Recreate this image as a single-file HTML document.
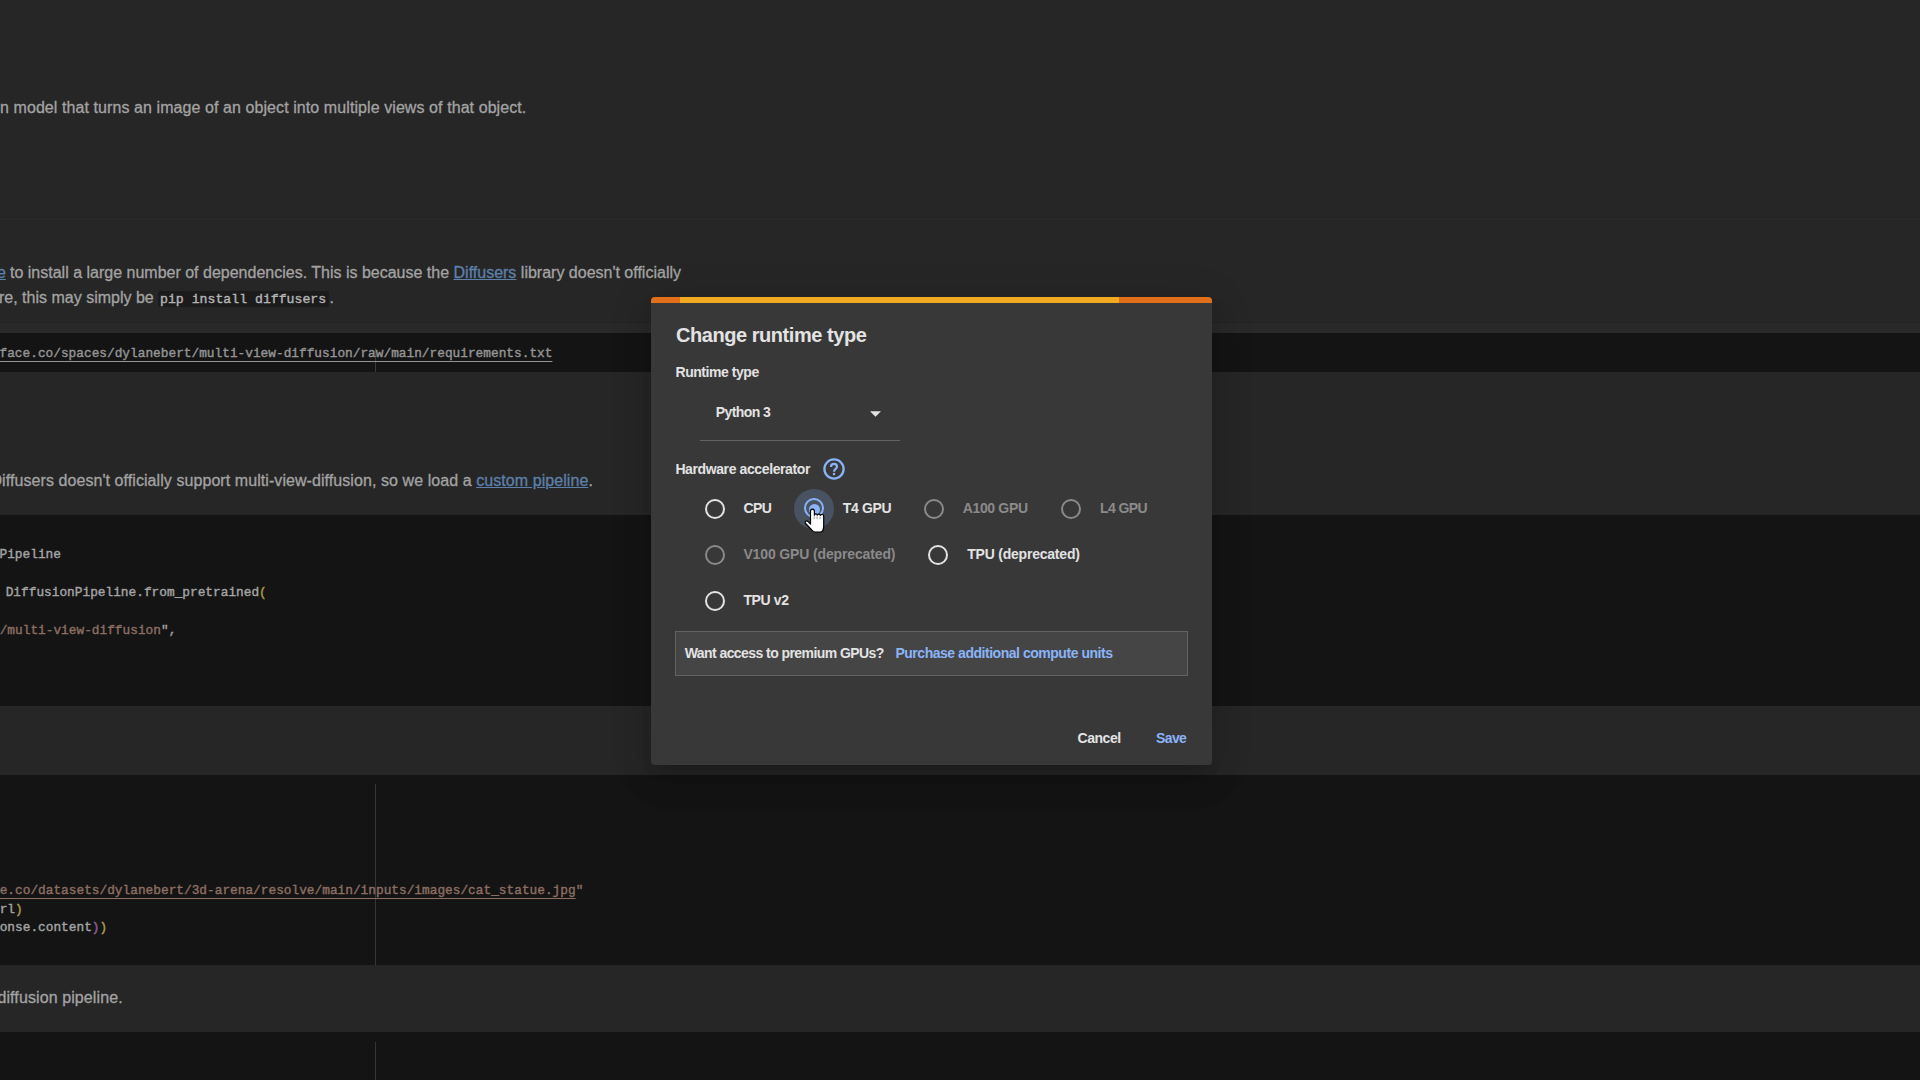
<!DOCTYPE html>
<html><head><meta charset="utf-8"><style>
html,body{margin:0;padding:0;}
body{width:1920px;height:1080px;overflow:hidden;position:relative;background:#262626;font-family:"Liberation Sans",sans-serif;}
</style></head><body>
<div style="position:absolute;left:0px;top:217px;width:1920px;height:1px;background:#222222;"></div>
<div style="position:absolute;left:0px;top:218px;width:1920px;height:1px;background:#292929;"></div>
<div style="position:absolute;left:0px;top:322px;width:1920px;height:1px;background:#232323;"></div>
<div style="position:absolute;left:0px;top:323px;width:1920px;height:10px;background:#292929;"></div>
<div style="position:absolute;left:0px;top:333px;width:1920px;height:39px;background:#141414;"></div>
<div style="position:absolute;left:0px;top:515px;width:1920px;height:191px;background:#141414;"></div>
<div style="position:absolute;left:0px;top:775px;width:1920px;height:190px;background:#141414;"></div>
<div style="position:absolute;left:0px;top:1032px;width:1920px;height:48px;background:#141414;"></div>
<div style="position:absolute;left:375px;top:348px;width:1px;height:24px;background:#3a3a3a;"></div>
<div style="position:absolute;left:375px;top:784px;width:1px;height:181px;background:#363636;"></div>
<div style="position:absolute;left:375px;top:1042px;width:1px;height:38px;background:#363636;"></div>
<div style="position:absolute;left:0px;top:96.75px;height:22px;line-height:22px;font-family:'Liberation Sans', sans-serif;font-size:16px;font-weight:normal;letter-spacing:0.08px;color:#a3a3a3;white-space:pre;-webkit-text-stroke:0.3px currentColor;">n model that turns an image of an object into multiple views of that object.</div>
<div style="position:absolute;left:10px;top:261.85px;height:22px;line-height:22px;font-family:'Liberation Sans', sans-serif;font-size:16px;font-weight:normal;letter-spacing:0px;color:#a3a3a3;white-space:pre;-webkit-text-stroke:0.3px currentColor;">to install a large number of dependencies. This is because the <span style="color:#5d80ab;text-decoration:underline">Diffusers</span> library doesn't officially</div>
<div style="position:absolute;left:-3px;top:261.85px;height:22px;line-height:22px;font-family:'Liberation Sans', sans-serif;font-size:16px;font-weight:normal;letter-spacing:0px;color:#a3a3a3;white-space:pre;-webkit-text-stroke:0.3px currentColor;"><span style="color:#5d80ab;text-decoration:underline">e</span></div>
<div style="position:absolute;left:-1px;top:287.15px;height:22px;line-height:22px;font-family:'Liberation Sans', sans-serif;font-size:16px;font-weight:normal;letter-spacing:0px;color:#a3a3a3;white-space:pre;-webkit-text-stroke:0.3px currentColor;">re, this may simply be </div>
<div style="position:absolute;left:158px;top:291px;width:171px;height:16px;background:#1b1b1b;border-radius:2px;"></div>
<div style="position:absolute;left:160px;top:290.69px;height:18px;line-height:18px;font-family:'Liberation Mono', monospace;font-size:13.2px;font-weight:normal;letter-spacing:0px;color:#b5b5b5;white-space:pre;-webkit-text-stroke:0.4px currentColor;">pip install diffusers</div>
<div style="position:absolute;left:329.5px;top:287.15px;height:22px;line-height:22px;font-family:'Liberation Sans', sans-serif;font-size:16px;font-weight:normal;letter-spacing:0px;color:#a3a3a3;white-space:pre;-webkit-text-stroke:0.3px currentColor;">.</div>
<div style="position:absolute;left:-0.5px;top:345.39px;height:18px;line-height:18px;font-family:'Liberation Mono', monospace;font-size:12.8px;font-weight:normal;letter-spacing:0px;color:#959595;white-space:pre;text-decoration:underline;text-underline-offset:3.5px;-webkit-text-stroke:0.4px currentColor;">face.co/spaces/dylanebert/multi-view-diffusion/raw/main/requirements.txt</div>
<div style="position:absolute;left:-9.5px;top:470.15px;height:22px;line-height:22px;font-family:'Liberation Sans', sans-serif;font-size:16px;font-weight:normal;letter-spacing:0.07px;color:#a3a3a3;white-space:pre;-webkit-text-stroke:0.3px currentColor;">Diffusers doesn't officially support multi-view-diffusion, so we load a <span style="color:#5d80ab;text-decoration:underline">custom pipeline</span>.</div>
<div style="position:absolute;left:-0.5px;top:545.59px;height:18px;line-height:18px;font-family:'Liberation Mono', monospace;font-size:12.8px;font-weight:normal;letter-spacing:0px;color:#a4a4a4;white-space:pre;-webkit-text-stroke:0.4px currentColor;">Pipeline</div>
<div style="position:absolute;left:-2px;top:583.59px;height:18px;line-height:18px;font-family:'Liberation Mono', monospace;font-size:12.8px;font-weight:normal;letter-spacing:0px;color:#a4a4a4;white-space:pre;-webkit-text-stroke:0.4px currentColor;"> DiffusionPipeline.from_pretrained<span style="color:#ad9c42">(</span></div>
<div style="position:absolute;left:-8px;top:622.09px;height:18px;line-height:18px;font-family:'Liberation Mono', monospace;font-size:12.8px;font-weight:normal;letter-spacing:0px;color:#8c6e62;white-space:pre;-webkit-text-stroke:0.4px currentColor;">t/multi-view-diffusion<span style="color:#a0a0a0">",</span></div>
<div style="position:absolute;left:-8px;top:881.89px;height:18px;line-height:18px;font-family:'Liberation Mono', monospace;font-size:12.8px;font-weight:normal;letter-spacing:0px;color:#8c6e62;white-space:pre;-webkit-text-stroke:0.4px currentColor;"><span style="text-decoration:underline;text-underline-offset:3.5px">ce.co/datasets/dylanebert/3d-arena/resolve/main/inputs/images/cat_statue.jpg</span>"</div>
<div style="position:absolute;left:-8px;top:900.59px;height:18px;line-height:18px;font-family:'Liberation Mono', monospace;font-size:12.8px;font-weight:normal;letter-spacing:0px;color:#a4a4a4;white-space:pre;-webkit-text-stroke:0.4px currentColor;">url<span style="color:#ad9c42">)</span></div>
<div style="position:absolute;left:-8px;top:919.09px;height:18px;line-height:18px;font-family:'Liberation Mono', monospace;font-size:12.8px;font-weight:normal;letter-spacing:0px;color:#a4a4a4;white-space:pre;-webkit-text-stroke:0.4px currentColor;">ponse.content<span style="color:#8a5f9c">)</span><span style="color:#ad9c42">)</span></div>
<div style="position:absolute;left:-8px;top:987.25px;height:22px;line-height:22px;font-family:'Liberation Sans', sans-serif;font-size:16px;font-weight:normal;letter-spacing:0.1px;color:#a3a3a3;white-space:pre;-webkit-text-stroke:0.3px currentColor;">-diffusion pipeline.</div>
<div style="position:absolute;left:651px;top:297px;width:561px;height:468px;background:#383838;border-radius:4px;box-shadow:0 11px 15px -7px rgba(0,0,0,.15),0 20px 30px 2px rgba(0,0,0,.09),0 6px 40px 6px rgba(0,0,0,.09);overflow:hidden"><div style="position:absolute;left:0;top:0;width:561px;height:6px;background:#e2701a"></div><div style="position:absolute;left:29px;top:0;width:439px;height:6px;background:#f2a922"></div></div>
<div style="position:absolute;left:676px;top:320.87px;height:28px;line-height:28px;font-family:'Liberation Sans', sans-serif;font-size:20px;font-weight:bold;letter-spacing:-0.45px;color:#e3e3e3;white-space:pre;">Change runtime type</div>
<div style="position:absolute;left:675.5px;top:362.25px;height:20px;line-height:20px;font-family:'Liberation Sans', sans-serif;font-size:14px;font-weight:bold;letter-spacing:-0.45px;color:#e3e3e3;white-space:pre;">Runtime type</div>
<div style="position:absolute;left:715.8px;top:402.35px;height:20px;line-height:20px;font-family:'Liberation Sans', sans-serif;font-size:14px;font-weight:bold;letter-spacing:-0.59px;color:#e3e3e3;white-space:pre;">Python 3</div>
<svg style="position:absolute;left:870px;top:411px" width="11" height="6" viewBox="0 0 10 5"><path d="M0 0L5 5L10 0Z" fill="#e3e3e3"/></svg>
<div style="position:absolute;left:700px;top:440px;width:200px;height:1.2px;background:#626262;"></div>
<div style="position:absolute;left:675.4px;top:458.55px;height:20px;line-height:20px;font-family:'Liberation Sans', sans-serif;font-size:14px;font-weight:bold;letter-spacing:-0.39px;color:#e3e3e3;white-space:pre;">Hardware accelerator</div>
<svg style="position:absolute;left:821.8px;top:457.3px" width="24" height="24" viewBox="0 0 24 24"><circle cx="12" cy="12" r="9.6" fill="none" stroke="#8ab4f8" stroke-width="2.3"/><path d="M9 10c0-1.75 1.3-3.1 3-3.1s3 1.3 3 2.9c0 2.2-3 2.1-3 4.9" fill="none" stroke="#8ab4f8" stroke-width="2.2"/><rect x="10.9" y="15.9" width="2.2" height="2.3" fill="#8ab4f8"/></svg>
<div style="position:absolute;left:704.9px;top:498.59999999999997px;width:16.2px;height:16.2px;border:2.5px solid #e3e3e3;border-radius:50%"></div>
<div style="position:absolute;left:743.6px;top:498.45px;height:20px;line-height:20px;font-family:'Liberation Sans', sans-serif;font-size:14px;font-weight:bold;letter-spacing:-0.653px;color:#e3e3e3;white-space:pre;">CPU</div>
<div style="position:absolute;left:794.4px;top:489.4px;width:40px;height:40px;border-radius:50%;background:rgba(138,180,248,0.21)"></div>
<div style="position:absolute;left:803.6999999999999px;top:498.1px;width:16.4px;height:16.4px;border:2.5px solid #8ab4f8;border-radius:50%"></div>
<div style="position:absolute;left:809.0px;top:503.5px;width:11px;height:11px;border-radius:50%;background:#8ab4f8"></div>
<div style="position:absolute;left:842.8px;top:498.45px;height:20px;line-height:20px;font-family:'Liberation Sans', sans-serif;font-size:14px;font-weight:bold;letter-spacing:-0.363px;color:#e3e3e3;white-space:pre;">T4 GPU</div>
<div style="position:absolute;left:923.6999999999999px;top:498.9px;width:16.2px;height:16.2px;border:2.5px solid #8a8a8a;border-radius:50%"></div>
<div style="position:absolute;left:962.7px;top:498.45px;height:20px;line-height:20px;font-family:'Liberation Sans', sans-serif;font-size:14px;font-weight:bold;letter-spacing:-0.338px;color:#8a8a8a;white-space:pre;">A100 GPU</div>
<div style="position:absolute;left:1060.9px;top:498.9px;width:16.2px;height:16.2px;border:2.5px solid #8a8a8a;border-radius:50%"></div>
<div style="position:absolute;left:1100px;top:498.45px;height:20px;line-height:20px;font-family:'Liberation Sans', sans-serif;font-size:14px;font-weight:bold;letter-spacing:-0.597px;color:#8a8a8a;white-space:pre;">L4 GPU</div>
<div style="position:absolute;left:704.8px;top:545.0px;width:16.2px;height:16.2px;border:2.5px solid #8a8a8a;border-radius:50%"></div>
<div style="position:absolute;left:743.4px;top:544.45px;height:20px;line-height:20px;font-family:'Liberation Sans', sans-serif;font-size:14px;font-weight:bold;letter-spacing:-0.135px;color:#8a8a8a;white-space:pre;">V100 GPU (deprecated)</div>
<div style="position:absolute;left:928.1px;top:545.0px;width:16.2px;height:16.2px;border:2.5px solid #e3e3e3;border-radius:50%"></div>
<div style="position:absolute;left:967.2px;top:544.45px;height:20px;line-height:20px;font-family:'Liberation Sans', sans-serif;font-size:14px;font-weight:bold;letter-spacing:-0.214px;color:#e3e3e3;white-space:pre;">TPU (deprecated)</div>
<div style="position:absolute;left:704.8px;top:590.8px;width:16.2px;height:16.2px;border:2.5px solid #e3e3e3;border-radius:50%"></div>
<div style="position:absolute;left:743.4px;top:590.25px;height:20px;line-height:20px;font-family:'Liberation Sans', sans-serif;font-size:14px;font-weight:bold;letter-spacing:-0.362px;color:#e3e3e3;white-space:pre;">TPU v2</div>
<div style="position:absolute;left:675px;top:631px;width:511px;height:43px;background:#454545;border:1px solid #626262;"></div>
<div style="position:absolute;left:684.7px;top:642.65px;height:20px;line-height:20px;font-family:'Liberation Sans', sans-serif;font-size:14px;font-weight:bold;letter-spacing:-0.57px;color:#e3e3e3;white-space:pre;">Want access to premium GPUs?</div>
<div style="position:absolute;left:895.4px;top:642.65px;height:20px;line-height:20px;font-family:'Liberation Sans', sans-serif;font-size:14px;font-weight:bold;letter-spacing:-0.47px;color:#8ab4f8;white-space:pre;">Purchase additional compute units</div>
<div style="position:absolute;left:1077.5px;top:728.35px;height:20px;line-height:20px;font-family:'Liberation Sans', sans-serif;font-size:14px;font-weight:bold;letter-spacing:-0.45px;color:#e3e3e3;white-space:pre;">Cancel</div>
<div style="position:absolute;left:1156px;top:728.35px;height:20px;line-height:20px;font-family:'Liberation Sans', sans-serif;font-size:14px;font-weight:bold;letter-spacing:-0.6px;color:#8ab4f8;white-space:pre;">Save</div>
<svg style="position:absolute;left:800px;top:505px" width="30" height="32" viewBox="0 0 30 32">
<path d="M10.5 6.3C10.5 5.1 11.4 4.2 12.45 4.2C13.5 4.2 14.4 5.1 14.4 6.3L14.4 10.2C14.4 9.4 15 8.9 15.8 8.9C16.6 8.9 17.2 9.4 17.3 10.2C17.4 9.5 18 9.1 18.8 9.1C19.6 9.1 20.2 9.6 20.3 10.4C20.5 9.8 21.1 9.5 21.9 9.5C22.9 9.5 23.7 10.3 23.7 11.3L23.7 21C23.7 24.5 22.3 27.2 19.8 27.2L15.5 27.2C13.8 27.2 12.8 26.3 11.8 25L5.6 18.5C5 17.8 5.1 16.9 5.7 16.4C6.4 15.8 7.4 15.9 8.1 16.6L10.5 19Z" fill="#fff" stroke="#000" stroke-width="1.2" stroke-linejoin="round"/>
<path d="M14.2 11.4V14.2M17.1 11.4V14.2M20.1 11.6V14.2" stroke="#8a8a8a" stroke-width="0.9"/>
</svg>
</body></html>
